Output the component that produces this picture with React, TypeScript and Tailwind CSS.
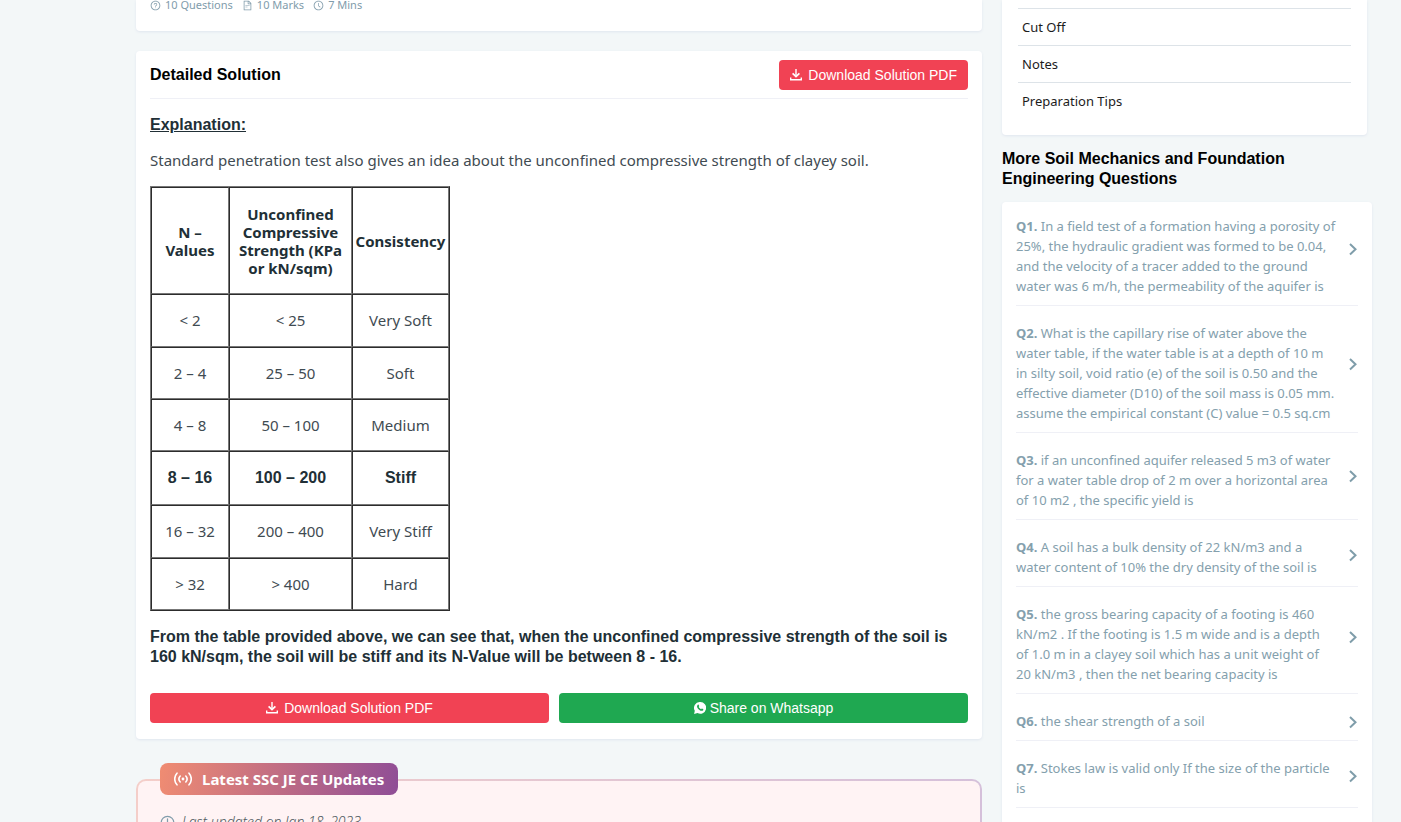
import { LuClock } from "react-icons/lu";
import { AiOutlineClockCircle, AiOutlineFileText, AiOutlineQuestionCircle } from "react-icons/ai";

type Question = { id: string; text: string };

const questions: Question[] = [
  { id: "Q1.", text: "In a field test of a formation having a porosity of 25%, the hydraulic gradient was formed to be 0.04, and the velocity of a tracer added to the ground water was 6 m/h, the permeability of the aquifer is" },
  { id: "Q2.", text: "What is the capillary rise of water above the water table, if the water table is at a depth of 10 m in\u00a0silty soil, void ratio (e) of the soil is 0.50 and the effective diameter (D10) of the soil mass is 0.05 mm. assume the empirical constant (C) value = 0.5 sq.cm" },
  { id: "Q3.", text: "if an unconfined aquifer released 5 m3 of water for a water table drop of 2 m over a horizontal area of 10 m2 , the specific yield is" },
  { id: "Q4.", text: "A soil has a bulk density of 22 kN/m3 and a water content of 10% the dry density of the soil is" },
  { id: "Q5.", text: "the gross bearing capacity of a footing is 460 kN/m2 . If the footing is 1.5 m wide and is a depth of\u00a01.0 m in a clayey soil which has a unit weight of 20\u00a0kN/m3 , then the net bearing capacity is" },
  { id: "Q6.", text: "the shear strength of a soil" },
  { id: "Q7.", text: "Stokes law is valid only If the size of the particle is" },
];

const rows = [
  { cells: ["< 2", "< 25", "Very Soft"], height: "h-[53px]" },
  { cells: ["2 – 4", "25 – 50", "Soft"], height: "h-[52px]" },
  { cells: ["4 – 8", "50 – 100", "Medium"], height: "h-[52px]" },
  { cells: ["8 – 16", "100 – 200", "Stiff"], height: "h-[54px]", strong: true },
  { cells: ["16 – 32", "200 – 400", "Very Stiff"], height: "h-[53px]" },
  { cells: ["> 32", "> 400", "Hard"], height: "h-[52px]" },
];

function DownloadIcon() {
  return (
    <svg viewBox="0 0 12 12" className="size-3" aria-hidden="true">
      <path d="M6 0v6.500M.7 8.500v2.200h10.600V8.500" fill="none" stroke="currentColor" strokeWidth="1.4" />
      <path d="m2.600 4.300 3.400 3.300 3.400-3.300" fill="none" stroke="currentColor" strokeWidth="1.700" />
    </svg>
  );
}

function WhatsappIcon() {
  return (
    <svg viewBox="0 0 12 12" className="size-3" aria-hidden="true">
      <path fill="currentColor" d="M6.2 0a5.9 5.9 0 1 1-2.7 11.1L.1 12l.7-3.2A5.9 5.9 0 0 1 6.2 0Z" />
      <path fill="#1fa851" d="M3.6 2.9c.5-.5.9-.4 1.1 0l.5 1.1c.1.3-.4.8-.5 1 .5 1.1 1.3 1.8 2.4 2.3.3-.2.6-.9 1-.7l1.1.6c.4.2.2.8-.2 1.2-.9.8-2.3.5-3.6-.4C4.2 7.1 3.2 5.8 3 4.5c0-.6.2-1.2.6-1.6Z" />
    </svg>
  );
}

function BroadcastIcon() {
  return (
    <svg viewBox="0 0 18 14" className="h-[14px] w-[18px]" fill="none" stroke="currentColor" strokeWidth="1.6" strokeLinecap="round" aria-hidden="true">
      <circle cx="9" cy="7" r="1.4" fill="currentColor" stroke="none" />
      <path d="M6.2 4a4.5 4.5 0 0 0 0 6M11.8 4a4.5 4.5 0 0 1 0 6M3 1.2a8.5 8.5 0 0 0 0 11.6M15 1.2a8.5 8.5 0 0 1 0 11.6" />
    </svg>
  );
}

function Chevron() {
  return (
    <svg viewBox="0 0 10 16" className="h-4 w-[10px]" fill="none" stroke="#7f9daa" strokeWidth="2" aria-hidden="true">
      <path d="m2 3 5.500 5.200L2 13.400" />
    </svg>
  );
}

const cell = "border border-t-[#2c2c2c] border-r-[#777] border-b-[#777] border-l-[#2c2c2c] p-0";

export default function App() {
  return (
    <div className="min-h-screen bg-[#f3f7f8] pr-[29px] pl-[136px] font-['Noto_Sans',sans-serif] text-[#212f36]">
      <div className="flex items-start gap-5">
        <main className="min-w-0 flex-1">
          <section className="rounded-b bg-white px-[14px] pb-[21px] shadow-sm shadow-slate-200">
            <ul className="flex h-[10px] items-center gap-[9px] text-[11px] leading-[10px] text-[#819cab]">
              <li className="flex items-center gap-1"><AiOutlineQuestionCircle className="size-[11px]" />10 Questions</li>
              <li className="flex items-center gap-1"><AiOutlineFileText className="size-[11px]" />10 Marks</li>
              <li className="flex items-center gap-1"><AiOutlineClockCircle className="size-[11px]" />7 Mins</li>
            </ul>
          </section>

          <section className="mt-5 rounded bg-white px-[14px] pt-[9px] pb-4 shadow-sm shadow-slate-200">
            <header className="flex items-center justify-between border-b border-[#eff0f6] pb-2">
              <h2 className="font-['Liberation_Sans',sans-serif] text-base font-bold text-black">Detailed Solution</h2>
              <button className="flex h-[30px] items-center gap-[6px] rounded bg-[#f14254] px-[11px] font-['Liberation_Sans',sans-serif] text-sm text-white">
                <DownloadIcon />Download Solution PDF
              </button>
            </header>
            <h3 className="mt-4 font-['Liberation_Sans',sans-serif] text-base leading-5 font-bold underline">Explanation:</h3>
            <p className="mt-[15px] text-[15px] leading-5 text-[#3f4b52]">Standard penetration test also gives an idea about the unconfined compressive strength of clayey soil.</p>

            <table className="mt-4 w-[300px] table-fixed border-separate border-spacing-0 border border-t-[#777] border-r-[#2c2c2c] border-b-[#2c2c2c] border-l-[#777] text-center text-[15px]">
              <colgroup><col className="w-[78px]" /><col className="w-[123px]" /><col className="w-[97px]" /></colgroup>
              <thead>
                <tr className="h-[107px] leading-[18px]">
                  <th scope="col" className={cell}>N –<br />Values</th>
                  <th scope="col" className={cell}>Unconfined<br />Compressive<br />Strength (KPa<br />or kN/sqm)</th>
                  <th scope="col" className={cell}>Consistency</th>
                </tr>
              </thead>
              <tbody>
                {rows.map((row) => (
                  <tr key={row.cells[0]} className={`${row.height} ${row.strong ? "font-['Liberation_Sans',sans-serif] text-base font-bold" : "text-[#3f4b52]"}`}>
                    {row.cells.map((value) => <td key={value} className={cell}>{value}</td>)}
                  </tr>
                ))}
              </tbody>
            </table>

            <p className="mt-4 font-['Liberation_Sans',sans-serif] text-base leading-5 font-bold">
              From the table provided above, we can see that, when the unconfined compressive strength of the soil is 160 kN/sqm, the soil will be stiff and its N-Value will be between 8 - 16.
            </p>
            <div className="mt-[26px] flex gap-[10px] font-['Liberation_Sans',sans-serif] text-sm text-white">
              <button className="flex h-[30px] w-[399px] items-center justify-center gap-[6px] rounded bg-[#f14254]"><DownloadIcon />Download Solution PDF</button>
              <button className="flex h-[30px] flex-1 items-center justify-center gap-1 rounded bg-[#1fa851]"><WhatsappIcon />Share on Whatsapp</button>
            </div>
          </section>

          <section className="mt-6 h-[59px] overflow-hidden">
            <div className="-mb-4 flex px-6">
              <h2 className="relative flex h-8 items-center gap-[10px] rounded-lg bg-linear-[100deg,#f08c72,#8f4d96] px-[14px] text-[15px] font-bold text-white">
                <BroadcastIcon />Latest SSC JE CE Updates
              </h2>
            </div>
            <div className="rounded-t-[10px] bg-linear-to-r from-[#f4cec9] to-[#d5c0da] px-[2px] pt-[2px]">
              <div className="rounded-t-lg bg-[#fff3f4] px-[22px] pt-[31px] pb-8">
                <p className="flex items-center gap-[7px] text-sm leading-5 font-light text-[#4f5a60] italic"><LuClock className="size-[15px] text-[#819cab]" />Last updated on Jan 18, 2023</p>
              </div>
            </div>
          </section>
        </main>

        <aside className="w-[370px] shrink-0">
          <nav className="mr-[5px] rounded-b bg-white px-4 pt-2 pb-4 text-[13px] shadow-sm shadow-slate-200">
            {["Cut Off", "Notes", "Preparation Tips"].map((label) => (
              <a key={label} href="#" className="flex h-[37px] items-center border-t border-[#dde3e8] px-1 pt-[2px] text-[#1c1c1c]">{label}</a>
            ))}
          </nav>
          <h2 className="mt-[14px] font-['Liberation_Sans',sans-serif] text-base leading-5 font-bold text-black">More Soil Mechanics and Foundation Engineering Questions</h2>
          <ul className="mt-[13px] rounded bg-white px-[14px] pb-8 text-[13px] leading-5 text-[#84a0ad] shadow-sm shadow-slate-200">
            {questions.map((q) => (
              <li key={q.id} className="border-b border-[#eff0f6] pt-[17px] pb-[9px] first:pt-[14px]">
                <a href="#" className="flex justify-between">
                  <span className="w-[322px]"><b>{q.id}</b> {q.text}</span>
                  <span className="flex flex-col pt-[2px]">
                    <span className="grow-3" /><Chevron /><span className="grow-5" />
                  </span>
                </a>
              </li>
            ))}
          </ul>
        </aside>
      </div>
    </div>
  );
}
